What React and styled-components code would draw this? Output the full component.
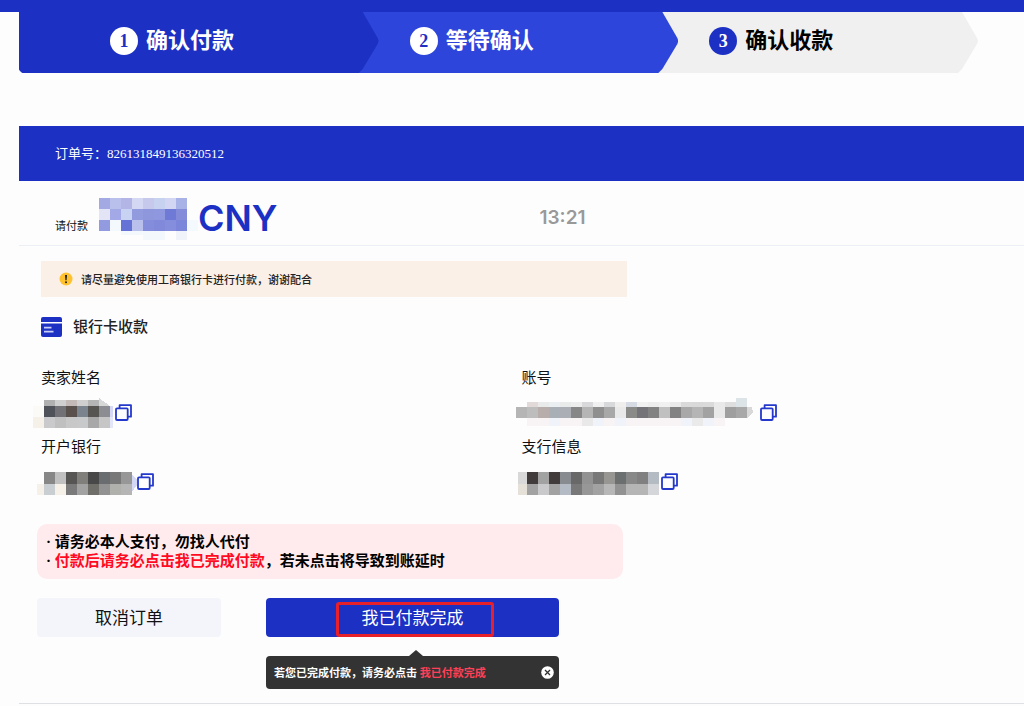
import React from 'react';
import styled, { createGlobalStyle } from 'styled-components';

const BLUE = '#1c30c4';

const GlobalStyle = createGlobalStyle`
  * {
    box-sizing: border-box;
  }

  body {
    margin: 0;
    background-color: #fdfdfe;
    color: #111;
    font-family: 'Liberation Serif', 'Noto Sans CJK SC', serif;
  }

  button {
    font-family: inherit;
    border: 0;
    padding: 0;
    cursor: pointer;
  }
`;

const TopBar = styled.div`
  height: 12px;
  background-color: ${BLUE};
`;

const Page = styled.main`
  margin-left: 19px;
  border-bottom: 1px solid #dfe0e4;
`;

const Steps = styled.ol`
  display: flex;
  list-style: none;
  margin: 0 46px 53px 0;
  padding: 0;
`;

const stepColors = {
  done: { background: BLUE, text: 'white', badge: 'white', number: BLUE },
  active: { background: '#2d45da', text: 'white', badge: 'white', number: BLUE },
  idle: { background: '#f0f0f0', text: 'black', badge: BLUE, number: 'white' },
};

const Step = styled.li`
  position: relative;
  z-index: ${({ $order }) => 3 - $order};
  display: flex;
  align-items: center;
  gap: 8px;
  flex: 1 1 ${({ $order }) => ($order === 0 ? '44px' : '0px')};
  height: 61px;
  margin-left: ${({ $order }) => ($order === 0 ? '0' : '-44px')};
  padding: 0 0 4px ${({ $order }) => ($order === 0 ? '91px' : '75px')};
  border-bottom-left-radius: 4px;
  background-color: ${({ $status }) => stepColors[$status].background};
  color: ${({ $status }) => stepColors[$status].text};
  font-size: 22px;
  font-weight: bold;
  line-height: 32px;
  white-space: nowrap;
  clip-path: polygon(
    0 0,
    calc(100% - 16px) 0,
    calc(100% - 1px) 26px,
    100% 29px,
    calc(100% - 1px) 32px,
    calc(100% - 16px) 57px,
    calc(100% - 20px) 100%,
    3px 100%,
    0 calc(100% - 3px)
  );
`;

const StepNumber = styled.span`
  display: flex;
  align-items: center;
  justify-content: center;
  width: 28px;
  height: 28px;
  border-radius: 50%;
  background-color: ${({ $status }) => stepColors[$status].badge};
  color: ${({ $status }) => stepColors[$status].number};
  font-size: 18px;
`;

const OrderBar = styled.div`
  display: flex;
  align-items: center;
  height: 55px;
  padding: 0 0 3px 36px;
  background-color: ${BLUE};
  color: white;
  font-size: 13px;
`;

const AmountRow = styled.div`
  display: grid;
  grid-template-columns: 1fr 1fr;
  height: 65px;
  padding: 16px 0 0 36px;
  border-bottom: 1px solid #eceff5;
`;

const Amount = styled.div`
  display: flex;
  align-items: flex-start;
`;

const AmountLabel = styled.span`
  margin: 20px 11px 0 0;
  font-size: 11px;
  line-height: 18px;
`;

const Currency = styled.strong`
  color: ${BLUE};
  font-family: Inter, sans-serif;
  font-size: 36px;
  font-weight: 600;
  line-height: 42px;
`;

const Timer = styled.time`
  color: #999;
  font-family: Inter, sans-serif;
  font-size: 19px;
  font-weight: 600;
  line-height: 42px;
`;

const Details = styled.section`
  padding: 15px 22px 27px;
`;

const Notice = styled.div`
  display: flex;
  align-items: center;
  gap: 8px;
  max-width: 586px;
  height: 36px;
  padding-left: 18px;
  background-color: #fbf0e8;
  color: #222;
  font-size: 11px;
  font-weight: 500;
`;

const Heading = styled.h2`
  display: flex;
  align-items: center;
  gap: 11px;
  margin: 18px 0 29px;
  color: #222;
  font-size: 15px;
  font-weight: 500;
  line-height: 24px;
`;

const Fields = styled.dl`
  display: grid;
  grid-template-columns: 1fr 1fr;
  row-gap: 9px;
  margin: 0;
`;

const FieldLabel = styled.dt`
  margin-bottom: 10px;
  font-size: 15px;
  line-height: 20px;
`;

const FieldValue = styled.dd`
  display: flex;
  align-items: center;
  gap: ${({ $gap }) => $gap || 0}px;
  height: 30px;
  margin: 0 0 0 -8px;
`;

const CopyButton = styled.button`
  display: flex;
  padding-bottom: 2px;
  background: none;
`;

const Footer = styled.section`
  padding: 0 18px 14px;
`;

const Warning = styled.div`
  max-width: 586px;
  padding: 9px 9px 8px;
  border-radius: 10px;
  background-color: #ffebee;
  color: black;
  font-size: 15px;
  font-weight: bold;
  line-height: 19px;

  p {
    margin: 0;
  }
`;

const RedText = styled.span`
  color: #ff0a22;
`;

const Actions = styled.div`
  display: flex;
  align-items: flex-start;
  gap: 45px;
  margin-top: 19px;
`;

const Button = styled.button`
  position: relative;
  width: ${({ $primary }) => ($primary ? '293px' : '184px')};
  height: 39px;
  padding-bottom: 2px;
  border-radius: 4px;
  background-color: ${({ $primary }) => ($primary ? BLUE : '#f3f5fb')};
  color: ${({ $primary }) => ($primary ? 'white' : '#111')};
  font-size: 17px;
`;

const Highlight = styled.span`
  position: absolute;
  top: 4px;
  bottom: 0;
  left: 70px;
  width: 158px;
  border: 3px solid #e8202a;
  border-radius: 3px;
`;

const Tooltip = styled.div`
  position: relative;
  display: flex;
  align-items: center;
  justify-content: space-between;
  width: 293px;
  height: 33px;
  margin-top: 19px;
  padding: 0 5px 1px 8px;
  border-radius: 4px;
  background-color: #333;
  color: white;
  font-size: 11px;
  font-weight: bold;

  &::before {
    content: '';
    position: absolute;
    bottom: 100%;
    left: 143px;
    border: 7px solid transparent;
    border-top-width: 0;
    border-bottom: 6px solid #333;
  }
`;

const TooltipAccent = styled.span`
  color: #ff4058;
`;

const CloseButton = styled.button`
  display: flex;
  border-radius: 50%;
  background: none;
`;

const CopyIcon = () => (
  <svg width="17" height="17" viewBox="0 0 17 17" fill="none" stroke="#2439cc" strokeWidth="1.8">
    <path d="M4.6 4V1.2H16V12.7H13" strokeLinejoin="round" />
    <rect x="1" y="4.3" width="11.7" height="11.7" rx="1" />
  </svg>
);

const CardIcon = () => (
  <svg width="21" height="20" viewBox="0 0 21 20">
    <path d="M2 0H19Q21 0 21 2V5H0V2Q0 0 2 0Z" fill={BLUE} />
    <path d="M0 6.5H21V18Q21 20 19 20H2Q0 20 0 18Z" fill={BLUE} />
    <path d="M3 10.7H10.5M3 14.7H12.5" stroke="#c9cff5" strokeWidth="1.8" />
  </svg>
);

const WarnIcon = () => (
  <svg width="14" height="14" viewBox="0 0 14 14">
    <circle cx="7" cy="7" r="6.5" fill="#ffc22e" />
    <path d="M6 3H8L7.6 8.3H6.4Z" fill="#222" />
    <circle cx="7" cy="10.3" r="1" fill="#222" />
  </svg>
);

const CloseIcon = () => (
  <svg width="13" height="13" viewBox="0 0 13 13">
    <circle cx="6.5" cy="6.5" r="6.3" fill="white" />
    <path d="M4 4L9 9M9 4L4 9" stroke="#333" strokeWidth="1.3" />
  </svg>
);

// Pixelated blocks over private values. A row is [x, y, height, 'color color ...'],
// every block is 11px wide and "-" leaves a hole.
const Mosaic = ({ width, height, rows, children }) => (
  <svg width={width} height={height} shapeRendering="crispEdges" aria-hidden="true">
    {rows.map(([x, y, h, colors]) => colors.split(' ').map((color, i) => (
      color !== '-' && (
        <rect key={`${y}-${x + i * 11}`} x={x + i * 11} y={y} width="11" height={h} fill={`#${color}`} />
      )
    )))}
    {children}
  </svg>
);

const amountRows = [
  [0, 1, 11, 'a2a9e3 b9c0eb b3b5e6 d5d8f3 c6c9ec c7d2f0 d3d6f3 a9b2e6'],
  [0, 12, 11, 'e3e5f6 a2a9e6 c8d2f2 929bdd 8e96dc 8f97de 6f7ad6 848cda'],
  [0, 23, 11, '929be0 f4f9fe 6673d6 b9c0ec 848ddb 8089da 858edd 7b86da f4f9fd'],
  [22, 34, 4, 'f3f8fc f3f8fc f3f8fc f3f8fc - f1f3fa'],
  [44, 38, 5, 'f3f8fc f3f8fc - f1f3fa'],
];

const fields = [
  {
    label: '卖家姓名',
    width: 80,
    gap: 2,
    rows: [
      [11, 2, 6, 'b0b0b0 cfcfcf c3bab8 cfcfcf b5b5b5'],
      [0, 8, 11, 'fbfaf6 505259 727276 5a504c 7a838e 575552 8b8d92 d4d8f4'],
      [0, 19, 11, 'f5f0e8 cacacd c0c0c0 c8c8c8 c8c9ca a8a8a8 c6c6c6 e3e6f8'],
    ],
    edge: <path d="M66 8V0L77 8Z" fill="#d5d8d6" />,
  },
  {
    label: '账号',
    width: 240,
    gap: 6,
    rows: [
      [13, 4, 5, 'e2dad9 e9eaea eaeff1 e9eaea ededed d9d9db f0f0f0 d8d9da f0eded d5dae3 f1f1f1 ededed f1f1f1 eaeaea dadada d9d9d9 dadadb e9e9e9 dedede e0e0e0'],
      [222, 0, 9, 'dce4e8'],
      [2, 9, 11, 'b5b5b5 bdbdbd b7adab a8b0b5 acaeb5 878787 b5b5b5 8f8f8f a8a8a8 e9e9e9 8a8a88 747478 828282 c0c0c0 828282 a8a8a8 b5b5b5 a2a2a2 e9e9ea 9f9f9f a8a8a8'],
      [13, 20, 8, 'f8f4f6 f8f4f6 f1f3fb f8f4f6 f8f4f6 e9e9ea f1f3fb f8f4f6 f1f3fb f8f4f6 f8f4f6 f8f4f6 f8f4f6 f8f4f6 f1f3fb eaeaeb f1f3fb f8f4f6'],
    ],
    edge: <path d="M233 9H238L239 14L236 18L233 20Z" fill="#d8d8d8" />,
  },
  {
    label: '开户银行',
    width: 104,
    rows: [
      [11, 5, 12, '878787 c0c0c0 575553 807f7b 484848 6a6d70 787878 979797'],
      [4, 17, 11, 'f5f0e8'],
      [11, 17, 11, 'c9ced3 f5f0e8 7a7a7a a2a2a2 706e68 929292 b0b0ac b5b5b5'],
    ],
    edge: <path d="M99 7L104 13V18L99 25Z" fill="#d4d8f4" />,
  },
  {
    label: '支行信息',
    width: 147,
    rows: [
      [4, 5, 12, 'd8d8d8'],
      [4, 17, 11, 'e5e1d8'],
      [13, 5, 12, '423b3b a2a2a2 423b3b 888c91 686868 929292 787878 979692 6c6f70 888888 808080 b5bbc2'],
      [13, 17, 11, 'a2a2a2 c9c9cb a2a2a2 b5bbc5 787878 979797 a2a2a2 b7b7b7 929292 b5b5b5 b5b5b5 d5d6da'],
    ],
  },
];

const steps = [
  { title: '确认付款', status: 'done' },
  { title: '等待确认', status: 'active' },
  { title: '确认收款', status: 'idle' },
];

const App = () => (
  <>
    <GlobalStyle />
    <TopBar />
    <Page>
      <Steps>
        {steps.map(({ title, status }, i) => (
          <Step key={title} $order={i} $status={status}>
            <StepNumber $status={status}>{i + 1}</StepNumber>
            {title}
          </Step>
        ))}
      </Steps>
      <OrderBar>订单号：826131849136320512</OrderBar>
      <AmountRow>
        <Amount>
          <AmountLabel>请付款</AmountLabel>
          <Mosaic width={99} height={43} rows={amountRows} />
          <Currency>CNY</Currency>
        </Amount>
        <Timer>13:21</Timer>
      </AmountRow>
      <Details>
        <Notice>
          <WarnIcon />
          请尽量避免使用工商银行卡进行付款，谢谢配合
        </Notice>
        <Heading>
          <CardIcon />
          银行卡收款
        </Heading>
        <Fields>
          {fields.map(({
            label, width, gap, rows, edge,
          }) => (
            <div key={label}>
              <FieldLabel>{label}</FieldLabel>
              <FieldValue $gap={gap}>
                <Mosaic width={width} height={30} rows={rows}>{edge}</Mosaic>
                <CopyButton type="button" aria-label={`复制${label}`}>
                  <CopyIcon />
                </CopyButton>
              </FieldValue>
            </div>
          ))}
        </Fields>
      </Details>
      <Footer>
        <Warning>
          <p>· 请务必本人支付，勿找人代付</p>
          <p>
            ·
            {' '}
            <RedText>付款后请务必点击我已完成付款</RedText>
            ，若未点击将导致到账延时
          </p>
        </Warning>
        <Actions>
          <Button type="button">取消订单</Button>
          <div>
            <Button type="button" $primary>
              我已付款完成
              <Highlight />
            </Button>
            <Tooltip role="tooltip">
              <span>
                若您已完成付款，请务必点击
                {' '}
                <TooltipAccent>我已付款完成</TooltipAccent>
              </span>
              <CloseButton type="button" aria-label="关闭">
                <CloseIcon />
              </CloseButton>
            </Tooltip>
          </div>
        </Actions>
      </Footer>
    </Page>
  </>
);

export default App;
